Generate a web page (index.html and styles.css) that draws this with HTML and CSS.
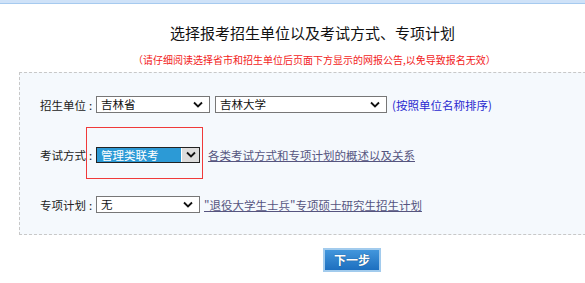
FILE: index.html
```html
<!DOCTYPE html>
<html lang="zh">
<head>
    <meta charset="UTF-8">
    <title>选择报考招生单位以及考试方式、专项计划</title>
    <link rel="stylesheet" href="styles.css">
</head>
<body>

<div class="topbar"></div>

<h1 class="title">选择报考招生单位以及考试方式、专项计划</h1>
<p class="notice">（请仔细阅读选择省市和招生单位后页面下方显示的网报公告,以免导致报名无效）</p>

<div class="panel">
    <!-- 招生单位 -->
    <div class="row">
        <span class="label">招生单位<span class="colon">:</span></span>
        <div class="select sel-prov">
            <span class="sel-text">吉林省</span>
            <svg class="chev" width="10" height="7" viewBox="0 0 10 7"><path d="M1 1.5 L5 5.5 L9 1.5" fill="none" stroke="#111" stroke-width="1.8"/></svg>
        </div>
        <div class="select sel-unit">
            <span class="sel-text">吉林大学</span>
            <svg class="chev" width="10" height="7" viewBox="0 0 10 7"><path d="M1 1.5 L5 5.5 L9 1.5" fill="none" stroke="#111" stroke-width="1.8"/></svg>
        </div>
        <span class="hint">(按照单位名称排序)</span>
    </div>

    <!-- 考试方式 -->
    <div class="row">
        <span class="label">考试方式<span class="colon">:</span></span>
        <div class="select sel-mode">
            <span class="sel-text">管理类联考</span>
            <span class="arrow-box">
                <svg width="10" height="7" viewBox="0 0 10 7"><path d="M1 1.5 L5 5.5 L9 1.5" fill="none" stroke="#111" stroke-width="1.8"/></svg>
            </span>
            <div class="mark"></div>
        </div>
        <a class="link" href="#">各类考试方式和专项计划的概述以及关系</a>
    </div>

    <!-- 专项计划 -->
    <div class="row">
        <span class="label">专项计划<span class="colon">:</span></span>
        <div class="select sel-plan">
            <span class="sel-text">无</span>
            <svg class="chev" width="10" height="7" viewBox="0 0 10 7"><path d="M1 1.5 L5 5.5 L9 1.5" fill="none" stroke="#111" stroke-width="1.8"/></svg>
        </div>
        <a class="link link-plan" href="#">"退役大学生士兵"专项硕士研究生招生计划</a>
    </div>
</div>

<div class="actions">
    <button class="next-btn">下一步</button>
</div>

</body>
</html>
```

FILE: styles.css
```css
body {
    margin: 0;
    padding: 0;
    background: #fff;
    font-family: "Noto Sans CJK SC", "Noto Sans", sans-serif;
    color: #222;
    overflow: hidden;
}
.topbar {
    height: 3px;
    background: #cfe2f8;
    border-bottom: 1px solid #a6caef;
}
.title {
    margin: 19px 0 0 0;
    padding-left: 170px;
    font-size: 15px;
    font-weight: normal;
    line-height: 20px;
    color: #111;
}
.notice {
    margin: 10px 0 0 0;
    padding-left: 133px;
    font-size: 10px;
    line-height: 14px;
    color: #f21c1c;
}
.panel {
    margin: 5px 0 0 19px;
    width: 620px;
    background: #f5f9fd;
    border: 1px dashed #c8c8c8;
    padding: 23px 0 21px 20px;
    display: flex;
    flex-direction: column;
    gap: 33px;
}
.row {
    display: flex;
    align-items: center;
    height: 17px;
    font-size: 11.5px;
}
.label {
    width: 56px;
    flex-shrink: 0;
    white-space: nowrap;
    color: #222;
}
.colon {
    margin-left: 3px;
}
.select {
    position: relative;
    box-sizing: border-box;
    height: 17px;
    border: 1px solid #777;
    background: #fff;
    display: flex;
    align-items: center;
    justify-content: space-between;
    padding: 0 6px 0 4px;
    color: #111;
}
.sel-prov { width: 114px; }
.sel-unit { width: 172px; margin-left: 5px; }
.sel-plan { width: 104px; }
.sel-text {
    line-height: 15px;
}
.hint {
    margin-left: 5px;
    color: #2a2ad0;
}
.sel-mode {
    width: 104px;
    height: 16px;
    border-color: #222;
    padding: 0;
}
.sel-mode .sel-text {
    flex: 1;
    height: 100%;
    background: #2c9ad6;
    color: #fff;
    padding-left: 4px;
    line-height: 14px;
    border-right: 1px solid #fff;
}
.arrow-box {
    width: 17px;
    height: 100%;
    background: #dcdcdc;
    display: flex;
    align-items: center;
    justify-content: center;
}
.mark {
    position: absolute;
    left: -11px;
    top: -21px;
    width: 115px;
    height: 50px;
    border: 1px solid #f03a3a;
}
.link {
    margin-left: 8px;
    color: #56557f;
    text-decoration: underline;
}
.link-plan {
    margin-left: 4px;
}
.actions {
    padding: 11px 0 0 323px;
}
.next-btn {
    width: 58px;
    height: 24px;
    border: 2px solid #a2cbed;
    background: linear-gradient(#4296dc, #1d6fbf);
    color: #fff;
    font-family: "Noto Sans CJK SC", sans-serif;
    font-size: 12px;
    font-weight: bold;
    padding: 0;
    cursor: pointer;
    text-shadow: 0 0 1px #0a3d70;
}
```
